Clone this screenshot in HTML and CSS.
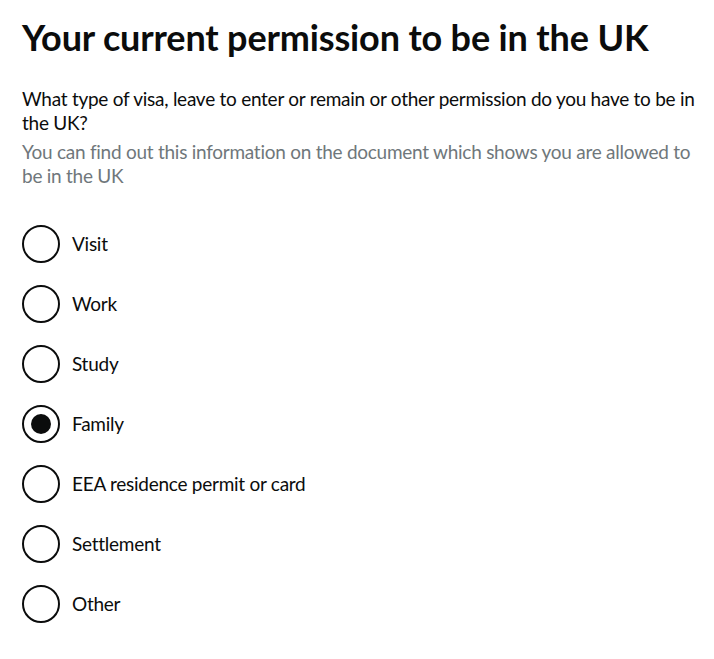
FILE: index.html
```html
<!DOCTYPE html>
<html lang="en">
<head>
    <meta charset="UTF-8">
    <meta name="viewport" content="width=device-width, initial-scale=1.0">
    <title>Your current permission to be in the UK</title>
    <link rel="stylesheet" href="styles.css">
</head>
<body>
    <main class="page">
        <h1 class="heading">Your current permission to be in the UK</h1>

        <fieldset class="fieldset">
            <legend class="question">What type of visa, leave to enter or remain or other permission do you have to be in the UK?</legend>
            <div class="hint">You can find out this information on the document which shows you are allowed to be in the UK</div>

            <div class="radios">
                <label class="radio">
                    <input type="radio" name="permission" value="visit">
                    <span class="radio-mark"></span>
                    <span class="radio-label">Visit</span>
                </label>
                <label class="radio">
                    <input type="radio" name="permission" value="work">
                    <span class="radio-mark"></span>
                    <span class="radio-label">Work</span>
                </label>
                <label class="radio">
                    <input type="radio" name="permission" value="study">
                    <span class="radio-mark"></span>
                    <span class="radio-label">Study</span>
                </label>
                <label class="radio">
                    <input type="radio" name="permission" value="family" checked>
                    <span class="radio-mark"></span>
                    <span class="radio-label">Family</span>
                </label>
                <label class="radio">
                    <input type="radio" name="permission" value="eea">
                    <span class="radio-mark"></span>
                    <span class="radio-label">EEA residence permit or card</span>
                </label>
                <label class="radio">
                    <input type="radio" name="permission" value="settlement">
                    <span class="radio-mark"></span>
                    <span class="radio-label">Settlement</span>
                </label>
                <label class="radio">
                    <input type="radio" name="permission" value="other">
                    <span class="radio-mark"></span>
                    <span class="radio-label">Other</span>
                </label>
            </div>
        </fieldset>
    </main>
</body>
</html>
```

FILE: styles.css
```css
body {
    margin: 0;
    font-family: Lato, 'Liberation Sans', sans-serif;
    color: #0b0c0c;
    background: #ffffff;
}
.page {
    padding: 17px 0 20px 22px;
    max-width: 680px;
}
.heading {
    font-size: 36px;
    line-height: 40px;
    font-weight: 700;
    letter-spacing: -0.15px;
    margin: 0 0 30px;
}
.fieldset {
    border: 0;
    margin: 0;
    padding: 0;
    min-width: 0;
}
.question,
.hint,
.radio-label {
    font-size: 19px;
    line-height: 24px;
    letter-spacing: -0.26px;
}
.question {
    padding: 0;
    margin-bottom: 5px;
}
.hint {
    color: #6f777b;
    margin-bottom: 36px;
}
.radios {
    display: flex;
    flex-direction: column;
    gap: 20px;
}
.radio {
    display: flex;
    align-items: center;
    gap: 12px;
    height: 40px;
    cursor: pointer;
}
.radio input {
    position: absolute;
    opacity: 0;
    width: 0;
    height: 0;
    margin: 0;
}
.radio-mark {
    flex: none;
    box-sizing: border-box;
    width: 38px;
    height: 38px;
    border: 2px solid #0b0c0c;
    border-radius: 50%;
    position: relative;
}
.radio input:checked + .radio-mark::after {
    content: '';
    position: absolute;
    top: 7px;
    left: 7px;
    width: 20px;
    height: 20px;
    border-radius: 50%;
    background: #0b0c0c;
}
```
